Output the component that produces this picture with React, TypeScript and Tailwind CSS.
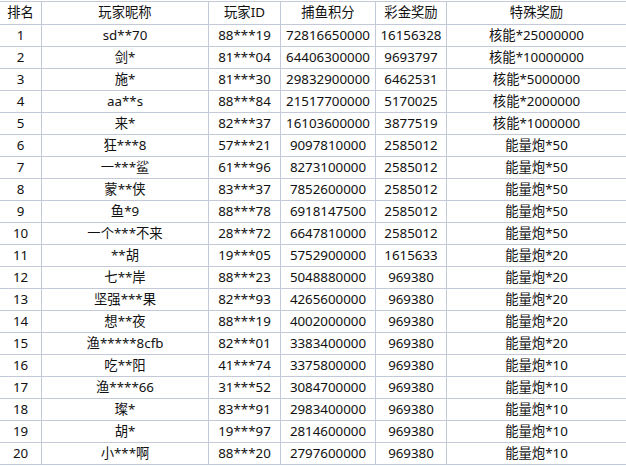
import React from "react";

const rows: [string, string, string, string, string, string][] = [
  ["1", "sd**70", "88***19", "72816650000", "16156328", "核能*25000000"],
  ["2", "剑*", "81***04", "64406300000", "9693797", "核能*10000000"],
  ["3", "施*", "81***30", "29832900000", "6462531", "核能*5000000"],
  ["4", "aa**s", "88***84", "21517700000", "5170025", "核能*2000000"],
  ["5", "来*", "82***37", "16103600000", "3877519", "核能*1000000"],
  ["6", "狂***8", "57***21", "9097810000", "2585012", "能量炮*50"],
  ["7", "一***鲨", "61***96", "8273100000", "2585012", "能量炮*50"],
  ["8", "蒙**侠", "83***37", "7852600000", "2585012", "能量炮*50"],
  ["9", "鱼*9", "88***78", "6918147500", "2585012", "能量炮*50"],
  ["10", "一个***不来", "28***72", "6647810000", "2585012", "能量炮*50"],
  ["11", "**胡", "19***05", "5752900000", "1615633", "能量炮*20"],
  ["12", "七**岸", "88***23", "5048880000", "969380", "能量炮*20"],
  ["13", "坚强***果", "82***93", "4265600000", "969380", "能量炮*20"],
  ["14", "想**夜", "88***19", "4002000000", "969380", "能量炮*20"],
  ["15", "渔*****8cfb", "82***01", "3383400000", "969380", "能量炮*20"],
  ["16", "吃**阳", "41***74", "3375800000", "969380", "能量炮*10"],
  ["17", "渔****66", "31***52", "3084700000", "969380", "能量炮*10"],
  ["18", "璨*", "83***91", "2983400000", "969380", "能量炮*10"],
  ["19", "胡*", "19***97", "2814600000", "969380", "能量炮*10"],
  ["20", "小***啊", "88***20", "2797600000", "969380", "能量炮*10"],
];

const header = ["排名", "玩家昵称", "玩家ID", "捕鱼积分", "彩金奖励", "特殊奖励"];

const cols = "grid grid-cols-[42px_167px_72px_95px_71px_1fr]";

function Row({ cells, h }: { cells: string[]; h: string }) {
  return (
    <div className={`${cols} border-b border-[#c4c9d9] ${h}`}>
      {cells.map((c, i) => (
        <div
          key={i}
          className={`flex items-center justify-center whitespace-nowrap overflow-hidden ${
            i < 5 ? "border-r border-[#c4c9d9]" : ""
          }`}
        >
          {c}
        </div>
      ))}
    </div>
  );
}

export default function App() {
  return (
    <div
      className="w-[626px] h-[466px] bg-white text-[13.33px] leading-none text-[#111] overflow-hidden"
      style={{ fontFamily: '"Noto Sans", "Noto Sans CJK SC", sans-serif' }}
    >
      <div className="mt-px border-t border-[#c4c9d9]">
        <Row cells={header} h="h-[23px]" />
        {rows.map((r) => (
          <Row key={r[0]} cells={r} h="h-[22px]" />
        ))}
      </div>
    </div>
  );
}
